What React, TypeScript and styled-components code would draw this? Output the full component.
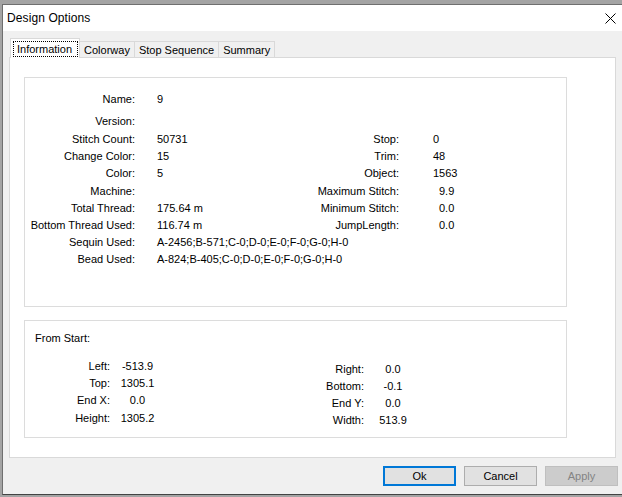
import React from "react";
import styled, { createGlobalStyle, css } from "styled-components";

const Global = createGlobalStyle`
  html, body { margin: 0; padding: 0; }
  body {
    width: 622px;
    height: 497px;
    overflow: hidden;
    background: #a4a4a4;
    font-family: "Liberation Sans", Arial, sans-serif;
    font-size: 11px;
    color: #000;
  }
  * { box-sizing: border-box; }
`;

const Desktop = styled.div`
  width: 622px;
  height: 497px;
  padding: 4px 0 0 2px;
`;

const Window = styled.div`
  width: 620px;
  height: 491px;
  display: flex;
  flex-direction: column;
  border-top: 1px solid #6f6f6f;
  border-left: 1px solid #6f6f6f;
  border-bottom: 1px solid #434343;
  background: #f0f0f0;
`;

const TitleBar = styled.div`
  height: 26px;
  flex: none;
  background: #ffffff;
  display: flex;
  align-items: center;
  justify-content: space-between;
  padding: 0 6px 0 4px;
`;

const Title = styled.div`
  font-size: 12px;
  color: #000;
  letter-spacing: 0.1px;
`;

const CloseButton = styled.div`
  width: 12px;
  height: 12px;
  display: flex;
  align-items: center;
  justify-content: center;
`;

const Body = styled.div`
  flex: 1;
  display: flex;
  flex-direction: column;
  padding: 7px 4px 0 6px;
`;

const TabStrip = styled.div`
  display: flex;
  align-items: flex-end;
  height: 19px;
  padding-left: 1px;
  position: relative;
  z-index: 1;
`;

const Tab = styled.div<{ $active?: boolean }>`
  display: flex;
  align-items: center;
  justify-content: center;
  border: 1px solid #d9d9d9;
  border-bottom: none;
  white-space: nowrap;
  ${(p) =>
    p.$active
      ? css`
          height: 20px;
          margin-bottom: -1px;
          background: #ffffff;
          padding: 2px 1px 0 2px;
          align-items: flex-start;
          position: relative;
          z-index: 2;
        `
      : css`
          height: 16px;
          margin-left: -1px;
          background: #f0f0f0;
          padding: 1px 4px 0 4px;
        `}
`;

const FocusRect = styled.span`
  border: 1px dotted #000;
  height: 16px;
  padding: 0 5px 0 3px;
  display: flex;
  align-items: center;
`;

const Panel = styled.div`
  height: 401px;
  margin-right: 2px;
  background: #ffffff;
  border: 1px solid #d9d9d9;
  padding: 19px 0 0 14px;
  display: flex;
  flex-direction: column;
  gap: 13px;
`;

const GroupBox = styled.div<{ $height: number }>`
  width: 543px;
  height: ${(p) => p.$height}px;
  border: 1px solid #dcdcdc;
  background: #ffffff;
`;

const InfoGroup = styled(GroupBox)`
  padding-top: 12px;
  display: flex;
  flex-direction: column;
`;

const Row = styled.div<{ $label: number; $gap: number; $value?: number; $h?: number }>`
  display: grid;
  grid-template-columns: ${(p) => p.$label}px ${(p) =>
      p.$value ? `${p.$value}px` : "auto"};
  column-gap: ${(p) => p.$gap}px;
  height: ${(p) => p.$h ?? 17}px;
  align-items: center;
  white-space: nowrap;
`;

const Label = styled.span`
  text-align: right;
`;

const Value = styled.span<{ $indent?: number; $center?: boolean }>`
  padding-left: ${(p) => p.$indent ?? 0}px;
  text-align: ${(p) => (p.$center ? "center" : "left")};
`;

const Spaced = styled.div<{ $top: number }>`
  margin-top: ${(p) => p.$top}px;
`;

const TwoColumns = styled.div<{ $left: number; $top?: number }>`
  display: grid;
  grid-template-columns: ${(p) => p.$left}px auto;
  margin-top: ${(p) => p.$top ?? 0}px;
  align-items: start;
`;

const Column = styled.div<{ $top?: number }>`
  display: flex;
  flex-direction: column;
  margin-top: ${(p) => p.$top ?? 0}px;
`;

const StartGroup = styled(GroupBox)`
  padding-top: 9px;
`;

const Heading = styled.div`
  height: 17px;
  line-height: 17px;
  padding-left: 10px;
`;

const Footer = styled.div`
  display: flex;
  justify-content: flex-end;
  gap: 8px;
  margin-top: 8px;
`;

const Button = styled.button<{ $variant?: "default" | "disabled" }>`
  width: 73px;
  height: 20px;
  font-family: "Liberation Sans", Arial, sans-serif;
  font-size: 11px;
  color: #000;
  background: #e1e1e1;
  border: 1px solid #adadad;
  padding: 0;
  margin: 0;
  ${(p) =>
    p.$variant === "default" &&
    css`
      border: 2px solid #0078d7;
    `}
  ${(p) =>
    p.$variant === "disabled" &&
    css`
      background: #cccccc;
      border-color: #bfbfbf;
      color: #838383;
    `}
`;

const leftRows: [string, string][] = [
  ["Stitch Count:", "50731"],
  ["Change Color:", "15"],
  ["Color:", "5"],
  ["Machine:", ""],
  ["Total Thread:", "175.64 m"],
  ["Bottom Thread Used:", "116.74 m"],
];

const rightRows: [string, string, number][] = [
  ["Stop:", "0", 0],
  ["Trim:", "48", 0],
  ["Object:", "1563", 0],
  ["Maximum Stitch:", "9.9", 6],
  ["Minimum Stitch:", "0.0", 6],
  ["JumpLength:", "0.0", 6],
];

const startLeft: [string, string][] = [
  ["Left:", "-513.9"],
  ["Top:", "1305.1"],
  ["End X:", "0.0"],
  ["Height:", "1305.2"],
];

const startRight: [string, string][] = [
  ["Right:", "0.0"],
  ["Bottom:", "-0.1"],
  ["End Y:", "0.0"],
  ["Width:", "513.9"],
];

export default function App() {
  return (
    <>
      <Global />
      <Desktop>
        <Window>
          <TitleBar>
            <Title>Design Options</Title>
            <CloseButton>
              <svg width="11" height="11" viewBox="0 0 11 11">
                <path d="M0.5 0.5 L10.5 10.5 M10.5 0.5 L0.5 10.5" stroke="#000" strokeWidth="1" fill="none" />
              </svg>
            </CloseButton>
          </TitleBar>
          <Body>
            <TabStrip>
              <Tab $active>
                <FocusRect>Information</FocusRect>
              </Tab>
              <Tab>Colorway</Tab>
              <Tab>Stop Sequence</Tab>
              <Tab>Summary</Tab>
            </TabStrip>
            <Panel>
              <InfoGroup $height={230}>
                <Row $label={110} $gap={22}>
                  <Label>Name:</Label>
                  <Value>9</Value>
                </Row>
                <Spaced $top={5}>
                  <Row $label={110} $gap={22}>
                    <Label>Version:</Label>
                    <Value />
                  </Row>
                </Spaced>
                <TwoColumns $left={275} $top={1}>
                  <Column>
                    {leftRows.map(([l, v]) => (
                      <Row key={l} $label={110} $gap={22} $h={17.3}>
                        <Label>{l}</Label>
                        <Value>{v}</Value>
                      </Row>
                    ))}
                  </Column>
                  <Column>
                    {rightRows.map(([l, v, i]) => (
                      <Row key={l} $label={99} $gap={34} $h={17.3}>
                        <Label>{l}</Label>
                        <Value $indent={i}>{v}</Value>
                      </Row>
                    ))}
                  </Column>
                </TwoColumns>
                <Row $label={110} $gap={22}>
                  <Label>Sequin Used:</Label>
                  <Value>A-2456;B-571;C-0;D-0;E-0;F-0;G-0;H-0</Value>
                </Row>
                <Row $label={110} $gap={22}>
                  <Label>Bead Used:</Label>
                  <Value>A-824;B-405;C-0;D-0;E-0;F-0;G-0;H-0</Value>
                </Row>
              </InfoGroup>
              <StartGroup $height={118}>
                <Heading>From Start:</Heading>
                <TwoColumns $left={275} $top={10}>
                  <Column>
                    {startLeft.map(([l, v]) => (
                      <Row key={l} $label={85} $gap={8} $value={39} $h={17.3}>
                        <Label>{l}</Label>
                        <Value $center>{v}</Value>
                      </Row>
                    ))}
                  </Column>
                  <Column $top={3}>
                    {startRight.map(([l, v]) => (
                      <Row key={l} $label={64} $gap={12} $value={34}>
                        <Label>{l}</Label>
                        <Value $center>{v}</Value>
                      </Row>
                    ))}
                  </Column>
                </TwoColumns>
              </StartGroup>
            </Panel>
            <Footer>
              <Button $variant="default">Ok</Button>
              <Button>Cancel</Button>
              <Button $variant="disabled">Apply</Button>
            </Footer>
          </Body>
        </Window>
      </Desktop>
    </>
  );
}
